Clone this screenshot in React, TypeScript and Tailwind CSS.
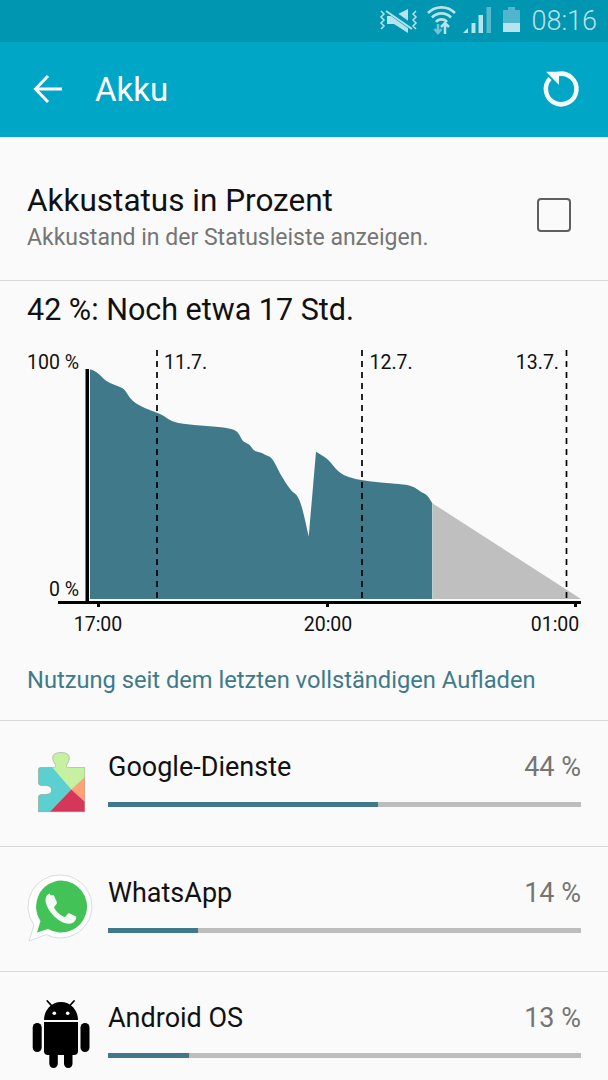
const POINTS = [[90,369.3],[97.3,371.7],[106,381.7],[120,386.7],[125,390],[131.7,401],[145,408.3],[157,412.7],[164,416],[173.3,422.3],[193.3,425],[220,427],[235,429.3],[240,435],[242.3,441.7],[250,444.3],[253.3,450.7],[261.7,452.7],[265,455],[272.3,457.3],[280,474.3],[291.7,491.7],[296.7,494.3],[301.7,505],[308.7,536.7],[308.7,536.7],[316,451.7],[316,451.7],[320,454.3],[328.3,459.3],[338.3,472.3],[349.3,477.7],[362,480.3],[380,482.7],[405,484.3],[415,487.3],[421.7,492.7],[426.7,494.3],[432.3,503.3]];

// quadratic through midpoints so the battery line isn't jagged
const smooth = (pts: number[][]) => {
    let d = `M${pts[0][0]} ${pts[0][1]}`;
    for (let i = 1; i < pts.length - 1; i++) {
        const mx = (pts[i][0] + pts[i + 1][0]) / 2;
        const my = (pts[i][1] + pts[i + 1][1]) / 2;
        d += `Q${pts[i][0]} ${pts[i][1]} ${mx} ${my}`;
    }
    const last = pts[pts.length - 1];
    return `${d}L${last[0]} ${last[1]}L432.3 599L90 599Z`;
};

const PUZZLE = 'M38.500 769.500q0-2 2-2h12.500c3 0 3-1.500 2-3.500-2-3-3-5-2-8 1-3 5-3.500 8-3.500s7 .5 8 3.500c1 3 0 5-2 8-1 2-1 3.500 2 3.500H84.700V811.700H38.500V797c0-1.500 1-2.500 3-2.500h3c4 0 7-1 7-4.500s-3-4.500-7-4.500h-3c-2 0-3-1-3-2.500z';

function StatusIcons() {
    return (
        <svg width="145" height="42" viewBox="375 0 145 42" fill="none">
            {/* muted + vibrate */}
            <path d="M387 16h7l14-7v24l-14-9h-7z" fill="#b7e3ec" />
            <path d="M385 8l28 20" stroke="#0095b0" strokeWidth="6" />
            <path d="M386 11l26 18" stroke="#b7e3ec" strokeWidth="2" />
            <path d="M381 11l3 3-3 3 3 3-3 3 3 3-3 3M416 11l-3 3 3 3-3 3 3 3-3 3 3 3" stroke="#b7e3ec" strokeWidth="1.500" />
            {/* wifi */}
            <path d="M428 13a19 19 0 0 1 27 0M432 17.500a13 13 0 0 1 19 0M436 22a7 7 0 0 1 11 0" stroke="#b7e3ec" strokeWidth="2.600" />
            <path d="M438 24v9M434.500 29l3.500 4 3.500-4" stroke="#6fc4d5" strokeWidth="2.500" />
            <path d="M445 34v-11M441 27l4-4 4 4" stroke="#b7e3ec" strokeWidth="2.500" />
            {/* signal */}
            <path d="M463 33l5-5v5z" fill="#b7e3ec" />
            <rect x="471.500" y="23" width="4" height="10" fill="#b7e3ec" />
            <rect x="478.500" y="15" width="4.500" height="18" fill="#b7e3ec" />
            <rect x="486.500" y="7" width="4.500" height="26" fill="#58b9cd" />
            {/* battery */}
            <path d="M503 10h5v-3h7v3h5v13h-17z" fill="#4fb6cb" />
            <rect x="503" y="23" width="17" height="9" fill="#b7e3ec" />
        </svg>
    );
}

function BatteryChart() {
    return (
        <svg width="608" height="304" viewBox="0 340 608 304" className="block" style={{ fontFamily: 'Roboto, sans-serif' }}>
            <path d={smooth(POINTS)} fill="#407a8a" />
            <polygon points="432.800,503.500 581,599 432.800,599" fill="#bfbfbf" />
            {[157, 362, 566.5].map(x => (
                <line key={x} x1={x} y1="350" x2={x} y2="599" stroke="#000" strokeWidth="1.700" strokeDasharray="6 5" />
            ))}
            <rect x="85.500" y="369" width="3.500" height="235" fill="#000" />
            <rect x="58" y="601" width="523" height="3" fill="#000" />
            <rect x="97" y="604" width="3" height="3" fill="#000" />
            <rect x="326" y="604" width="3" height="3" fill="#000" />
            <rect x="574" y="604" width="3" height="3" fill="#000" />
            <g fontSize="19.500" fill="#111">
                <text x="79" y="369" textAnchor="end">100 %</text>
                <text x="79" y="596" textAnchor="end">0 %</text>
                <text x="164" y="369">11.7.</text>
                <text x="369.500" y="369">12.7.</text>
                <text x="559" y="369" textAnchor="end">13.7.</text>
                <text x="98" y="631" textAnchor="middle">17:00</text>
                <text x="328" y="631" textAnchor="middle">20:00</text>
                <text x="555" y="631" textAnchor="middle">01:00</text>
            </g>
        </svg>
    );
}

function PuzzleIcon() {
    return (
        <svg width="68" height="68" viewBox="27 747 68 68">
            <clipPath id="puzzle">
                <path d={PUZZLE} />
            </clipPath>
            <g clipPath="url(#puzzle)">
                <rect x="27" y="747" width="68" height="68" fill="#c6f1a1" />
                <polygon points="27,767 52,767 71.300,789.500 49.700,812 27,812" fill="#5ccfd1" />
                <polygon points="85,777 85,802 71.300,789.500" fill="#ffa077" />
                <polygon points="71.300,789.500 85,802 85,812 49.700,812" fill="#d5365a" />
            </g>
            <path d={PUZZLE} fill="none" stroke="#8f8f8f" strokeOpacity="0.450" strokeWidth="1" />
        </svg>
    );
}

function WhatsAppIcon() {
    return (
        <svg width="68" height="72" viewBox="27 872.500 68 72">
            <path d="M61 874.500a31.500 31.500 0 1 1-15 59.500l-17 6.500 5-16a31.500 31.500 0 0 1 27-50z" fill="#fff" stroke="#dcdcdc" strokeWidth="1" />
            <path d="M61 880a26 26 0 1 1-13 48.500l-11 3.500 3.500-11.500a26 26 0 0 1 20.500-40.500z" fill="#43c258" />
            <path transform="translate(45.800 893) scale(.9) translate(-45.300 -893.500)" d="M50.500 895.500l2.500 0c1 0 1.500.5 2 1.500l2.500 6c.3 1 .2 1.700-.5 2.500l-2 2.500c-.5.6-.5 1.200-.1 1.900c2.500 4.200 6 7.500 10.500 9.500c.7.3 1.300.2 1.800-.4l2.300-2.700c.7-.8 1.400-1 2.400-.6l5.800 2.800c1 .5 1.500 1 1.400 1.900c-.3 3.500-3.800 6.500-7.800 6.700c-9 .4-23-11-26-23.500c-1-5 .9-9.200 4.200-10.100z" fill="#f4fbf5" />
        </svg>
    );
}

function AndroidIcon() {
    return (
        <svg width="68" height="72" viewBox="27 998 68 72">
            <path d="M44 1020a17 18 0 0 1 34 0z" fill="#000" />
            <path d="M47.300 1001l5.500 6M74 1001l-5.500 6" stroke="#000" strokeWidth="1.800" strokeLinecap="round" />
            <circle cx="54.300" cy="1013.300" r="1.800" fill="#fff" />
            <circle cx="67.700" cy="1013.300" r="1.800" fill="#fff" />
            <path d="M44 1022h34v29q0 4-4 4h-26q-4 0-4-4z" fill="#000" />
            <rect x="32.700" y="1023" width="9" height="29" rx="4.500" fill="#000" />
            <rect x="80.500" y="1023" width="9" height="29" rx="4.500" fill="#000" />
            <rect x="49.300" y="1045" width="8.500" height="23" rx="4.200" fill="#000" />
            <rect x="64" y="1045" width="8.500" height="23" rx="4.200" fill="#000" />
        </svg>
    );
}

const APPS = [
    { name: 'Google-Dienste', pct: 44, bar: 270, icon: <PuzzleIcon /> },
    { name: 'WhatsApp', pct: 14, bar: 90, icon: <WhatsAppIcon /> },
    { name: 'Android OS', pct: 13, bar: 81, icon: <AndroidIcon /> },
];

export default function App() {
    return (
        <div className="w-[608px] h-[1080px] overflow-hidden bg-[#fafafa] font-['Roboto',sans-serif]">
            {/* Status bar */}
            <div className="h-[42px] bg-[#0095b0] flex items-center justify-between pl-[375px] pr-[11px]">
                <StatusIcons />
                <span className="text-[27px] font-light text-[#b7e3ec] leading-none -ml-[3px]">08:16</span>
            </div>

            {/* App bar */}
            <div className="h-[95px] bg-[#00a6c6] flex items-center pl-[33px] pr-[27px]">
                <svg width="30" height="30" viewBox="0 0 30 30" fill="none" stroke="#fff" strokeWidth="3" className="-mt-[1px]">
                    <path d="M29 15H3M15 2L2.500 15L15 28" />
                </svg>
                <span className="ml-[32px] text-[33px] text-white font-normal flex-1 leading-none">Akku</span>
                <svg width="40" height="40" viewBox="541 70 40 40" fill="none" className="-mt-[1px]">
                    <path d="M558 75a15.300 15.300 0 1 1-8 4.500" stroke="#f5fbfc" strokeWidth="4.500" />
                    <path d="M546 72.700h13v13.300z" fill="#f5fbfc" />
                </svg>
            </div>

            {/* Percentage toggle */}
            <div className="h-[144px] flex justify-between pl-[27px] pr-[37px] border-b border-[#d9d9d9]">
                <div className="pt-[45px]">
                    <div className="text-[31.500px] leading-[38px] text-[#111]">Akkustatus in Prozent</div>
                    <div className="mt-[4px] text-[23px] leading-[28px] text-[#757575]">Akkustand in der Statusleiste anzeigen.</div>
                </div>
                <div className="mt-[61px] w-[34px] h-[34px] rounded-[4px] border-2 border-[#5f5f5f]" />
            </div>

            {/* Estimate */}
            <div className="h-[59px] pl-[27px] flex items-center text-[30.500px] text-[#111] leading-none">42 %: Noch etwa 17 Std.</div>

            <BatteryChart />

            <div className="h-[77px] pl-[27px] pt-[16px] text-[23.700px] leading-[40px] text-[#407a8a] border-b border-[#d9d9d9]">
                Nutzung seit dem letzten vollständigen Aufladen
            </div>

            {/* App usage list */}
            {APPS.map(a => (
                <div key={a.name} className="h-[125.5px] flex border-b border-[#d9d9d9] pr-[27px]">
                    <div className="w-[108px] shrink-0 pl-[27px] pt-[26px]">{a.icon}</div>
                    <div className="flex-1 pt-[28px]">
                        <div className="flex justify-between text-[27px] leading-[36px]">
                            <span className="text-[#111]">{a.name}</span>
                            <span className="text-[#757575]">{a.pct} %</span>
                        </div>
                        <div className="mt-[17px] h-[5px] bg-[#bdbdbd]">
                            <div className="h-full bg-[#407a8a]" style={{ width: a.bar }} />
                        </div>
                    </div>
                </div>
            ))}
        </div>
    );
}
